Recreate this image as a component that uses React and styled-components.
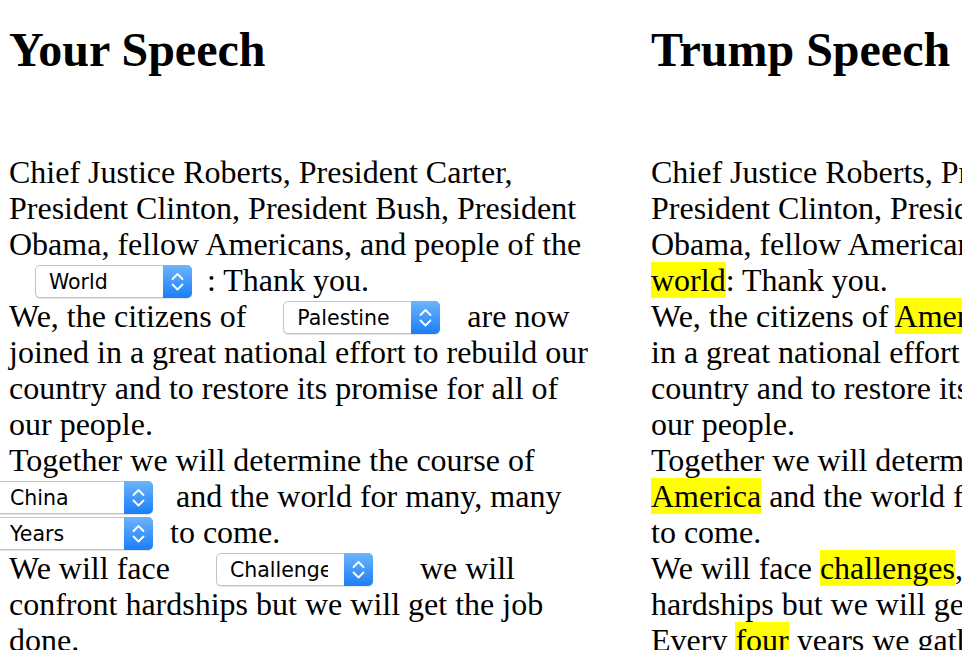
import React from "react";
import styled, { createGlobalStyle } from "styled-components";

const GlobalStyle = createGlobalStyle`
  html,
  body {
    margin: 0;
    overflow: hidden;
    background: #fff;
    color: #000;
    font-family: "Liberation Serif", "Times New Roman", serif;
  }
`;

const Page = styled.div`
  display: grid;
  grid-template-columns: 583px 583px;
  column-gap: 59px;
  padding-left: 9px;
`;

const Column = styled.section`
  min-width: 0;
`;

const Title = styled.h1`
  font-size: 48px;
  line-height: 55px;
  font-weight: bold;
  margin: 22px 0 77px;
`;

const Speech = styled.p`
  font-size: 32px;
  line-height: 36px;
  margin: 0;
`;

const Mark = styled.span`
  background: #ffff00;
`;

const PickerBox = styled.span`
  display: inline-flex;
  box-sizing: border-box;
  width: 157px;
  height: 33px;
  margin: 0 ${(p) => p.$mr}px 0 ${(p) => p.$ml}px;
  border: 1px solid #c4c4c4;
  border-radius: 5px;
  background: #fff;
  box-shadow: 0 1px 1px rgba(0, 0, 0, 0.12);
  vertical-align: text-bottom;
`;

const PickerSelect = styled.select`
  appearance: none;
  -webkit-appearance: none;
  flex: 1;
  min-width: 0;
  height: 100%;
  margin: 0;
  padding: 0 16px 0 13px;
  border: 0;
  background: transparent;
  color: #000;
  font-family: "DejaVu Sans", Verdana, sans-serif;
  font-size: 20.5px;
  outline: none;
`;

const PickerArrow = styled.span`
  display: flex;
  align-items: center;
  justify-content: center;
  width: 29px;
  margin: -1px -1px -1px 0;
  border-radius: 0 5px 5px 0;
  background: linear-gradient(#6cb4fc, #1a7ef8);
`;

const Picker = ({ options, value, ml = 0, mr = 0 }) => (
  <PickerBox $ml={ml} $mr={mr}>
    <PickerSelect defaultValue={value}>
      {options.map((o) => (
        <option key={o}>{o}</option>
      ))}
    </PickerSelect>
    <PickerArrow>
      <svg width="29" height="33" viewBox="0 0 29 33">
        <polyline
          points="9.5,14 14.5,9 19.5,14"
          fill="none"
          stroke="#fff"
          strokeWidth="1.8"
          strokeLinecap="round"
          strokeLinejoin="round"
        />
        <polyline
          points="9.5,19.5 14.5,24.5 19.5,19.5"
          fill="none"
          stroke="#fff"
          strokeWidth="1.8"
          strokeLinecap="round"
          strokeLinejoin="round"
        />
      </svg>
    </PickerArrow>
  </PickerBox>
);

const App = () => {
  return (
    <>
      <GlobalStyle />
      <Page>
        <Column>
          <Title>Your Speech</Title>
          <Speech>
            Chief Justice Roberts, President Carter, President Clinton,
            President Bush, President Obama, fellow Americans, and people of
            the <Picker options={["World", "Universe", "Galaxy"]} value="World" ml={26} mr={15} />
            : Thank you.
            <br />
            We, the citizens of{" "}
            <Picker options={["Palestine", "America", "Mexico"]} value="Palestine" ml={29} mr={19} />{" "}
            are now joined in a great national effort to rebuild our country
            and to restore its promise for all of our people.
            <br />
            Together we will determine the course of{" "}
            <Picker options={["China", "America", "Russia"]} value="China" ml={-13} mr={15} />{" "}
            and the world for many, many{" "}
            <Picker options={["Years", "Days", "Decades"]} value="Years" ml={-13} mr={9} />{" "}
            to come.
            <br />
            We will face{" "}
            <Picker options={["Challenges", "Problems", "Troubles"]} value="Challenges" ml={38} mr={39} />{" "}
            we will confront hardships but we will get the job done.
            <br />
            Every four years we gather on these steps to carry out the orderly
            and peaceful transfer of power.
          </Speech>
        </Column>
        <Column>
          <Title>Trump Speech</Title>
          <Speech>
            Chief Justice Roberts, President Carter, President Clinton,
            President Bush, President Obama, fellow Americans, and people of
            the <Mark>world</Mark>: Thank you.
            <br />
            We, the citizens of <Mark>America</Mark>, are now joined in&nbsp;a
            great national effort to rebuild our country and to restore its
            promise for all of our people.
            <br />
            Together we will determine the course of <Mark>America</Mark> and
            the world for many, many <Mark>years</Mark> to come.
            <br />
            We will face <Mark>challenges</Mark>, we will confront hardships
            but we will get the job done.
            <br />
            Every <Mark>four</Mark> years we gather on these steps to carry out
            the orderly and peaceful transfer of power, and we are grateful to
            President Obama and First Lady Michelle Obama for their gracious
            aid throughout this transition.
          </Speech>
        </Column>
      </Page>
    </>
  );
};

export default App;
